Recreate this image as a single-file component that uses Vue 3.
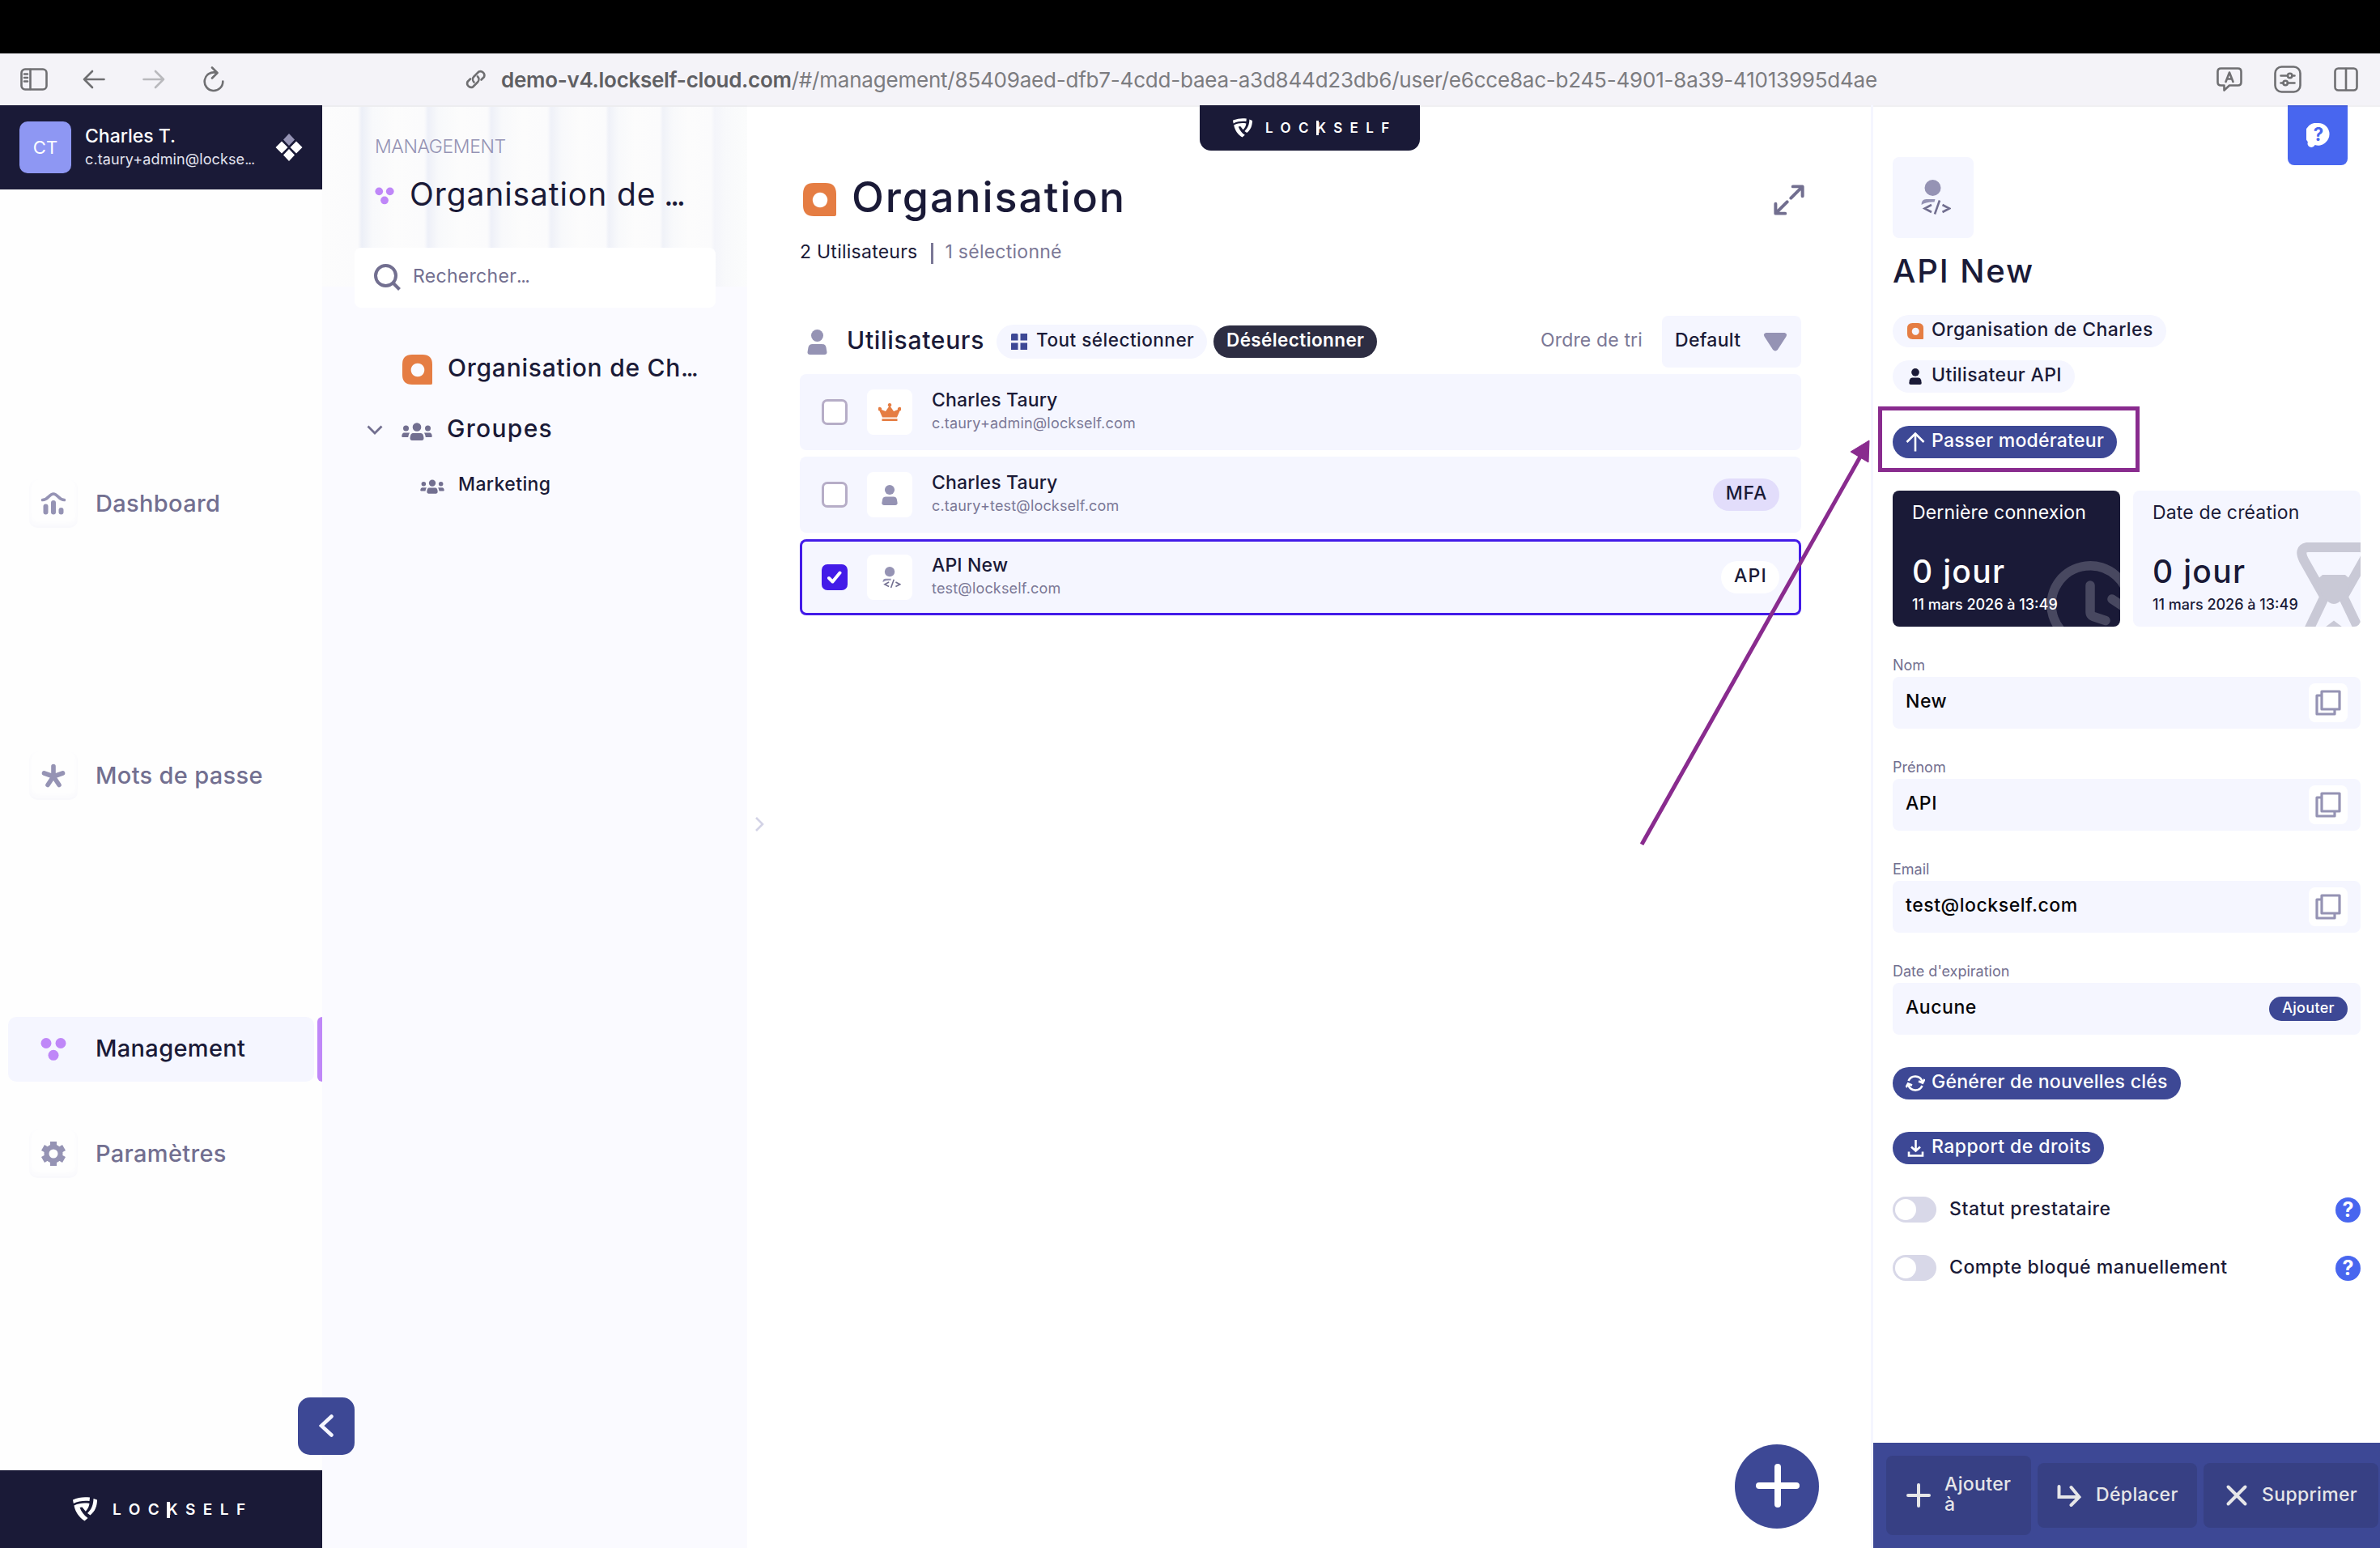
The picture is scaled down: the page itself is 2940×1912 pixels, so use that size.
<template>
  <div class="screen">
    <!-- icônes partagées -->
    <svg class="sprite" aria-hidden="true">
      <symbol id="i-shield" viewBox="0 0 30 30">
        <path d="M0 3.5C7 .3 14 -.4 21 .6L20.5 5C14 4.2 7 5 .8 8z" />
        <path d="M25.5 2L30 3.600C30 11 27.500 18 21.500 22.500L18 20C23.500 15 25.300 9 25.500 2z" />
        <path d="M1.500 10.500C8 7.500 14 7 20.500 8C20 12 18.500 15 15.800 17.700L11.500 12.500L8.500 13C10.500 18 13.500 22.500 18.500 26L14.500 29.500C7.500 25 3 18.500 1.500 10.500z" />
      </symbol>
      <symbol id="i-dots" viewBox="0 0 32 28">
        <circle cx="7" cy="6.500" r="6.500" /><circle cx="25" cy="6.500" r="6.500" /><circle cx="16" cy="21.300" r="6.500" />
      </symbol>
      <symbol id="i-dash" viewBox="0 0 30 28">
        <path d="M1.500 9.500C9 9.500 9.500 2 15 2s6 7.500 13.500 7.500" fill="none" stroke="currentColor" stroke-width="3.600" stroke-linecap="round" />
        <rect x="2.500" y="14.500" width="6" height="13" rx="3" /><rect x="12" y="10" width="6" height="17.500" rx="3" /><rect x="21.500" y="19" width="6" height="8.500" rx="3" />
      </symbol>
      <symbol id="i-star" viewBox="0 0 30 30">
        <path d="M15 3.500V16M15 16L3.500 12M15 16L26.500 12M15 16L8 26.500M15 16L22 26.500" fill="none" stroke="currentColor" stroke-width="5.600" stroke-linecap="round" />
      </symbol>
      <symbol id="i-gear" viewBox="0 0 30 30">
        <circle cx="15" cy="15" r="8.500" fill="none" stroke="currentColor" stroke-width="6" />
        <path d="M11 0h8v6h-8zM11 24h8v6h-8zM0 11L4 4.100L9.500 7.200L5.500 14.100zM20.500 22.800L24.500 15.900L30 19L26 25.900zM0 19L4 25.900L9.500 22.800L5.500 15.900zM20.500 7.200L24.500 14.100L30 11L26 4.100z" />
      </symbol>
      <symbol id="i-org" viewBox="0 0 40 40">
        <path fill-rule="evenodd" d="M13 0H27Q40 0 40 13V38Q40 40 38 40H13Q0 40 0 27V13Q0 0 13 0zM20.500 11.500a9 9 0 1 0 .010 0z" />
      </symbol>
      <symbol id="i-user" viewBox="0 0 24 31">
        <circle cx="12" cy="7.500" r="7.500" /><path d="M6 18H18Q22 18 23 22L24 28Q24 31 21 31H3Q0 31 0 28L1 22Q2 18 6 18z" />
      </symbol>
      <symbol id="i-group" viewBox="0 0 38 22">
        <circle cx="19" cy="5.500" r="5.300" /><circle cx="5.500" cy="7" r="3.500" /><circle cx="32.500" cy="7" r="3.500" />
        <path d="M14 13H24Q27 13 27.500 19Q27.500 22 25 22H13Q10.500 22 10.500 19Q11 13 14 13zM3 12.500H10Q8.500 15 8.200 18H1.500Q0 18 .3 16.200Q1 12.500 3 12.500zM28 12.500H35Q37 12.500 37.700 16.200Q38 18 36.500 18H29.800Q29.500 15 28 12.500z" />
      </symbol>
      <symbol id="i-api" viewBox="0 0 36 44">
        <circle cx="14" cy="10" r="10" />
        <path d="M0 31Q0 24 6 24H17L16 27.500Q6 27 0 31z" />
        <path d="M12.500 31L4 35.500L12.500 40M26 31L34.500 35.500L26 40M22.500 25.500L16.500 42.500" fill="none" stroke="#726f90" stroke-width="2.600" />
      </symbol>
      <symbol id="i-crown" viewBox="0 0 28 22">
        <path d="M14 0a2.200 2.200 0 0 1 1 4.200L19 10L24 8A2.300 2.300 0 1 1 26.500 9.500L23 17.500H5L1.500 9.500A2.300 2.300 0 1 1 4 8L9 10L13 4.200A2.200 2.200 0 0 1 14 0zM4.500 19.200H23.500V22H4.500z" />
      </symbol>
      <symbol id="i-copy" viewBox="0 0 32 32">
        <path d="M8 2H30V24H8zM7 7H2V30H24V25" fill="none" stroke="currentColor" stroke-width="3.200" stroke-linejoin="round" />
      </symbol>
      <symbol id="i-up" viewBox="0 0 24 24"><path d="M12 23.500V2M1.500 12L12 1.500L22.500 12" /></symbol>
      <symbol id="i-refresh" viewBox="0 0 24 24">
        <path d="M3.500 9A9.200 9.200 0 0 1 20.500 9.500M20.500 15A9.200 9.200 0 0 1 3.500 14.500M16 9.500L21 11.500L23.500 7M.500 17L3 12.500L8 14.500" />
      </symbol>
      <symbol id="i-download" viewBox="0 0 24 24"><path d="M12.500 2V15M7 10.500L12.500 15.500L18 10.500M4 16.500V21.500H21V16.500" /></symbol>
      <symbol id="i-plus" viewBox="0 0 30 30"><path d="M15 2V28M2 15H28" /></symbol>
      <symbol id="i-move" viewBox="0 0 30 30"><path d="M2.500 4V17H27M17.500 5L27.500 17L17.500 27" /></symbol>
      <symbol id="i-cross" viewBox="0 0 30 30"><path d="M4.500 4.500L25.500 25.500M25.500 4.500L4.500 25.500" /></symbol>
    </svg>

    <div class="notch"></div>

    <header class="toolbar">
      <svg class="tb-sidebar" viewBox="0 0 34 28"><rect x="1.500" y="1.500" width="31" height="25" rx="4.500" /><path d="M12.500 2V26M5 7.500H9M5 12H9M5 16.500H9" /></svg>
      <svg class="tb-back" viewBox="0 0 28 24"><path d="M12 2L2 12L12 22M2 12H26.500" /></svg>
      <svg class="tb-forward" viewBox="0 0 28 24"><path d="M16 2L26 12L16 22M26 12H1.500" /></svg>
      <svg class="tb-reload" viewBox="0 0 28 32"><path d="M17 7.800A11.300 11.300 0 1 0 25.300 18.500M12 1.500L18.500 8L12 14.500" /></svg>
      <svg class="tb-link" viewBox="0 0 28 28"><path d="M11.500 17.500A5 5 0 0 1 11.500 10.500L17.500 4.500A5 5 0 0 1 24 11L20.500 14.500M16 10.500A5 5 0 0 1 16 17.500L10 23.500A5 5 0 0 1 3.500 17L7 13.500" /></svg>
      <div class="url"><b>demo-v4.lockself-cloud.com</b>/#/management/85409aed-dfb7-4cdd-baea-a3d844d23db6/user/e6cce8ac-b245-4901-8a39-41013995d4ae</div>
      <svg class="tb-translate" viewBox="0 0 32 30"><path d="M5.500 1.500H26.500Q30.500 1.500 30.500 5.500V18.500Q30.500 22.500 26.500 22.500H16L9.500 28.500V22.500H5.500Q1.500 22.500 1.500 18.500V5.500Q1.500 1.500 5.500 1.500z" /><path d="M11.500 18L16 6.500L20.500 18M13 14.500H19" /></svg>
      <svg class="tb-settings" viewBox="0 0 34 34"><rect x="1.500" y="1.500" width="31" height="31" rx="8" /><path d="M8.500 12.500H17M22.500 12.500H25.500M8.500 21.500H11.500M17 21.500H25.500" /><circle cx="19.700" cy="12.500" r="2.700" /><circle cx="14.200" cy="21.500" r="2.700" /></svg>
      <svg class="tb-split" viewBox="0 0 30 30"><rect x="1.500" y="1.500" width="27" height="27" rx="4" /><path d="M15 2V28" /></svg>
    </header>

    <div class="app">
      <!-- navigation -->
      <aside class="nav">
        <div class="account">
          <div class="avatar">CT</div>
          <div class="account-text">
            <div class="account-name">Charles T.</div>
            <div class="account-mail">c.taury+admin@lockse<span class="dots">...</span></div>
          </div>
          <svg class="diamonds" viewBox="0 0 36 36">
            <path d="M18 1L25 8.500L18 16L11 8.500z" fill="#9593b4" />
            <path d="M9 10.500L16.500 18L9 25.500L1.500 18zM27 10.500L34.500 18L27 25.500L19.500 18zM18 20L25 27.500L18 35L11 27.500z" />
          </svg>
        </div>
        <nav class="nav-list">
          <div v-for="item in navItems" :key="item.label" class="nav-slot" :class="[item.slot, { active: item.active }]">
            <div class="nav-item">
              <span class="nav-tile"><svg><use :href="item.icon" /></svg></span>
              <span class="nav-label">{{ item.label }}</span>
            </div>
            <span v-if="item.active" class="nav-marker"></span>
          </div>
        </nav>
        <div class="nav-footer">
          <svg class="shield"><use href="#i-shield" /></svg>
          <div class="wordmark">LOC<span class="k">K</span>SELF</div>
        </div>
        <button class="collapse"><svg viewBox="0 0 18 28"><path d="M15.500 2.500L3 14L15.500 25.500" /></svg></button>
      </aside>

      <!-- arborescence -->
      <section class="tree">
        <div class="tree-hero">
          <div class="tree-kicker">MANAGEMENT</div>
          <div class="tree-title"><svg><use href="#i-dots" /></svg><span>Organisation de <span class="dots">...</span></span></div>
        </div>
        <div class="search">
          <svg viewBox="0 0 34 34"><circle cx="14.500" cy="14.500" r="12.500" /><path d="M23.500 23.500L31.500 31.500" /></svg>
          <div class="search-text">Rechercher<span class="dots">...</span></div>
        </div>
        <div class="tree-row root"><svg class="tree-org"><use href="#i-org" /></svg><span>Organisation de Ch<span class="dots">...</span></span></div>
        <div class="tree-row groups">
          <svg class="chevron" viewBox="0 0 20 12"><path d="M1.500 1.500L10 10L18.500 1.500" /></svg>
          <svg class="tree-group"><use href="#i-group" /></svg>Groupes
        </div>
        <div class="tree-row leaf"><svg class="tree-group"><use href="#i-group" /></svg>Marketing</div>
      </section>

      <!-- liste -->
      <main class="main">
        <svg class="panel-toggle" viewBox="0 0 12 20"><path d="M2 2L10 10L2 18" /></svg>
        <div class="brand-tab">
          <svg class="shield"><use href="#i-shield" /></svg>
          <div class="wordmark small">LOC<span class="k">K</span>SELF</div>
        </div>
        <div class="heading">
          <svg class="heading-org"><use href="#i-org" /></svg>
          <h1>Organisation</h1>
          <svg class="expand" viewBox="0 0 40 40"><path d="M25 2.500H37.500V15M37 3L22.500 17.500M2.500 25V37.500H15M3 37L17.500 22.500" /></svg>
        </div>
        <div class="counts"><span>2 Utilisateurs</span><i></i><span class="muted">1 sélectionné</span></div>
        <div class="list-head">
          <svg class="list-user"><use href="#i-user" /></svg>
          <h2>Utilisateurs</h2>
          <button class="pill select-all">
            <svg viewBox="0 0 20 20"><path d="M1.500 0H7a1.500 1.500 0 0 1 1.500 1.500V8.500H0V1.500A1.500 1.500 0 0 1 1.500 0zM11.500 0H20V8.500H11.500zM0 11.500H8.500V20H0zM11.500 11.500H20V20H11.500z" /></svg>
            Tout sélectionner
          </button>
          <button class="pill deselect">Désélectionner</button>
          <span class="sort-label">Ordre de tri</span>
          <div class="sort">Default<svg viewBox="0 0 30 24"><path d="M3 0H27Q31 1 29 5L18 22Q15 25 12 22L1 5Q-1 1 3 0z" /></svg></div>
        </div>
        <div class="rows">
          <div v-for="user in users" :key="user.mail" class="row" :class="{ selected: user.selected }">
            <span class="check"><svg v-if="user.selected" viewBox="0 0 18 16"><path d="M2 9L6.500 13.500L15.500 2.500" /></svg></span>
            <span class="row-tile"><svg :class="user.kind"><use :href="'#i-' + user.kind" /></svg></span>
            <div class="row-text">
              <div class="row-name">{{ user.name }}</div>
              <div class="row-mail">{{ user.mail }}</div>
            </div>
            <span v-if="user.tag" class="tag" :class="user.tag.toLowerCase()">{{ user.tag }}</span>
          </div>
        </div>
        <button class="fab"><svg viewBox="0 0 54 54"><path d="M27 4V50M4 27H50" /></svg></button>
      </main>

      <!-- détail -->
      <aside class="detail">
        <div class="help-tab">
          <svg viewBox="0 0 30 32"><path d="M15.500 0A14 14 0 0 1 29.500 14A14.500 14.500 0 0 1 11 28A4.500 4.500 0 1 1 2 24A14.500 14.500 0 0 1 15.500 0z" /><text x="15.500" y="22.500">?</text></svg>
        </div>
        <div class="detail-body">
          <div class="detail-tile"><svg><use href="#i-api" /></svg></div>
          <div class="detail-name">API New</div>
          <div class="chip org"><svg><use href="#i-org" /></svg>Organisation de Charles</div>
          <div class="chip api-user"><svg><use href="#i-user" /></svg>Utilisateur API</div>
          <button class="action promote"><svg><use href="#i-up" /></svg>Passer modérateur</button>
          <div class="cards">
            <div class="card dark">
              <svg class="clock" viewBox="0 0 110 110"><path d="M76 98A48 48 0 1 1 103 57M55 31V64Q55 68 59 69.500L74 74.500M82 48L106 64M96 92L104 84" /></svg>
              <div class="card-label">Dernière connexion</div>
              <div class="card-value">0 jour</div>
              <div class="card-date">11 mars 2026 à 13:49</div>
            </div>
            <div class="card">
              <svg class="hourglass" viewBox="0 0 94 120"><path d="M36 68L10 22Q3 8 14 6H80Q91 8 84 22L58 68M36 66L14 112M58 66L80 112M34 114L47 104L60 114" /><path class="sand" d="M33 40H61L69 47L60 68L53 74Q47 78 41 74L34 68L25 47z" /></svg>
              <div class="card-label">Date de création</div>
              <div class="card-value">0 jour</div>
              <div class="card-date">11 mars 2026 à 13:49</div>
            </div>
          </div>
          <div v-for="field in fields" :key="field.label" class="field">
            <div class="field-label">{{ field.label }}</div>
            <div class="field-box">
              <span>{{ field.value }}</span>
              <button v-if="field.action" class="add">{{ field.action }}</button>
              <span v-else class="copy"><svg><use href="#i-copy" /></svg></span>
            </div>
          </div>
          <button class="action keys"><svg><use href="#i-refresh" /></svg>Générer de nouvelles clés</button>
          <button class="action report"><svg><use href="#i-download" /></svg>Rapport de droits</button>
          <div v-for="label in switches" :key="label" class="switch-row">
            <span class="switch"></span><span class="switch-label">{{ label }}</span><span class="help">?</span>
          </div>
        </div>
        <div class="detail-footer">
          <button class="foot add-to"><svg><use href="#i-plus" /></svg><span>Ajouter<br>à</span></button>
          <button class="foot move"><svg><use href="#i-move" /></svg><span>Déplacer</span></button>
          <button class="foot remove"><svg><use href="#i-cross" /></svg><span>Supprimer</span></button>
        </div>
      </aside>
    </div>

    <!-- annotation -->
    <div class="mark-box"></div>
    <svg class="mark-arrow" viewBox="0 0 290 510"><path d="M4 502L274 23" /><polygon points="285,3 262,17 284,30" /></svg>
  </div>
</template>

<script setup>
const navItems = [
  { label: 'Dashboard', icon: '#i-dash', slot: 'dash' },
  { label: 'Mots de passe', icon: '#i-star', slot: 'pass' },
  { label: 'Management', icon: '#i-dots', slot: 'manage', active: true },
  { label: 'Paramètres', icon: '#i-gear', slot: 'params' }
]

const users = [
  { name: 'Charles Taury', mail: 'c.taury+admin@lockself.com', kind: 'crown' },
  { name: 'Charles Taury', mail: 'c.taury+test@lockself.com', kind: 'user', tag: 'MFA' },
  { name: 'API New', mail: 'test@lockself.com', kind: 'api', tag: 'API', selected: true }
]

const fields = [
  { label: 'Nom', value: 'New' },
  { label: 'Prénom', value: 'API' },
  { label: 'Email', value: 'test@lockself.com' },
  { label: "Date d'expiration", value: 'Aucune', action: 'Ajouter' }
]

const switches = ['Statut prestataire', 'Compte bloqué manuellement']
</script>

<style>
body {
  margin: 0;
  background: #fff;
}
</style>

<style scoped>
* {
  box-sizing: border-box;
}
.screen {
  position: relative;
  width: 2940px;
  height: 1912px;
  overflow: hidden;
  display: flex;
  flex-direction: column;
  background: #fff;
  color: #1a1a37;
  font-family: Inter, "Liberation Sans", sans-serif;
  font-size: 23px;
  line-height: 28px;
  white-space: nowrap;
}
.sprite {
  position: absolute;
  width: 0;
  height: 0;
}
svg {
  flex: none;
  fill: currentColor;
}
button {
  border: none;
  font: inherit;
  padding: 0;
  letter-spacing: inherit;
}
h1, h2 {
  margin: 0;
}

/* barre du navigateur */
.notch {
  height: 66px;
  background: #000;
}
.toolbar {
  height: 64px;
  background: #f4f3f8;
  display: flex;
  align-items: center;
  padding-left: 25px;
  color: #6f6f72;
}
.toolbar svg {
  fill: none;
  stroke: currentColor;
  stroke-width: 2.6;
  stroke-linecap: round;
  stroke-linejoin: round;
}
.tb-sidebar { width: 34px; height: 28px; }
.tb-back { width: 28px; height: 24px; margin-left: 43px; }
.toolbar .tb-forward { width: 28px; height: 24px; margin-left: 46px; color: #b9b9bd; }
.tb-reload { width: 28px; height: 32px; margin-left: 46px; }
.tb-link { width: 28px; height: 28px; margin-left: 296px; }
.url {
  width: 1720px;
  margin-left: 17px;
  padding-top: 2px;
  font-size: 26px;
  letter-spacing: -0.21px;
  color: #7c7c80;
}
.url b {
  font-weight: 600;
  letter-spacing: -0.29px;
  color: #5f5f63;
}
.tb-translate { width: 32px; height: 30px; margin-left: 399px; }
.tb-settings { width: 34px; height: 34px; margin-left: 39px; }
.tb-split { width: 30px; height: 30px; margin-left: 40px; }

.app {
  flex: 1;
  display: flex;
  min-height: 0;
  box-shadow: inset 0 2px #f0f0f2;
}

/* navigation */
.nav {
  position: relative;
  width: 398px;
  display: flex;
  flex-direction: column;
  background: #fefefe;
}
.account {
  height: 104px;
  padding-left: 24px;
  display: flex;
  align-items: center;
  background: #1a1a37;
  color: #fff;
}
.avatar {
  width: 64px;
  height: 64px;
  border-radius: 10px;
  background: #8e97f3;
  display: flex;
  align-items: center;
  justify-content: center;
  font-size: 22px;
}
.account-text {
  width: 235px;
  margin-left: 17px;
}
.account-name {
  font-size: 23px;
  font-weight: 500;
  line-height: 30px;
}
.account-mail {
  font-size: 18px;
  line-height: 28px;
  letter-spacing: 0.1px;
  color: #e3e3ee;
}
.account-mail .dots {
  letter-spacing: -1.3px;
}
.diamonds {
  width: 36px;
  height: 36px;
  margin-left: -1px;
}
.nav-list {
  flex: 1;
}
.nav-slot {
  display: flex;
  justify-content: space-between;
  height: 80px;
}
.nav-slot.dash { margin-top: 348px; }
.nav-slot.pass { margin-top: 256px; }
.nav-slot.manage { margin-top: 258px; }
.nav-slot.params { margin-top: 49px; }
.nav-item {
  width: 378px;
  margin-left: 10px;
  padding-left: 26px;
  border-radius: 10px;
  display: flex;
  align-items: center;
  color: #726f90;
}
.nav-tile {
  width: 60px;
  height: 60px;
  border-radius: 10px;
  display: flex;
  align-items: center;
  justify-content: center;
  color: #9593b4;
  box-shadow: inset 0 -4px 7px #f8f8fc;
}
.nav-tile svg {
  width: 30px;
  height: 30px;
}
.nav-label {
  margin-left: 22px;
  font-size: 29px;
  font-weight: 500;
  letter-spacing: 0.33px;
}
.active .nav-label {
  padding-bottom: 3px;
}
.active .nav-item {
  background: #f5f6ff;
  color: #1a1a37;
}
.active .nav-tile {
  color: #bf87f8;
  box-shadow: none;
}
.active .nav-tile svg {
  width: 32px;
}
.nav-marker {
  width: 6px;
  border-radius: 6px 0 0 6px;
  background: #bf87f8;
}
.nav-footer {
  height: 96px;
  padding-left: 90px;
  display: flex;
  align-items: center;
  background: #1a1a37;
  color: #fff;
}
.shield {
  width: 30px;
  height: 30px;
}
.wordmark {
  margin-left: 19px;
  padding-top: 2px;
  font-size: 19px;
  font-weight: 600;
  letter-spacing: 9.5px;
}
.k {
  position: relative;
}
.k::before {
  content: "";
  position: absolute;
  left: 0;
  top: 2px;
  width: 4px;
  height: 20px;
  background: #fff;
}
.collapse {
  position: absolute;
  left: 368px;
  top: 1596px;
  width: 70px;
  height: 71px;
  border-radius: 15px;
  background: #3d4895;
  z-index: 2;
}
.collapse svg {
  width: 18px;
  height: 28px;
  margin-top: 4px;
  fill: none;
  stroke: #f5f6ff;
  stroke-width: 4.5;
  stroke-linecap: round;
}

/* arborescence */
.tree {
  width: 525px;
  background-color: #fafaff;
  background-image:
    linear-gradient(90deg,
      #fcfcfc 0, #fbfbfc 44px, #eceff7 49px, #f8f9fb 62px,
      #fcfcfc 90px, #fbfbfc 126px, #eef0f8 131px, #f8f9fb 144px,
      #fcfcfc 170px, #fbfbfc 204px, #eef0f8 209px, #f8f9fb 222px,
      #fcfcfc 246px, #fbfbfc 278px, #eff1f8 283px, #f8f9fb 296px,
      #fcfcfc 318px, #fbfbfc 350px, #eff1f8 354px, #f8f9fb 366px,
      #fcfcfc 386px, #fbfbfc 417px, #f0f2f8 421px, #f8f9fb 433px,
      #fcfcfc 452px, #fbfbfc 480px, #f4f5fa 485px, #f8f9fb 498px, #fbfcfc 525px);
  background-size: 525px 224px;
  background-repeat: no-repeat;
  box-shadow: inset 0 2px #ededf0;
}
.tree-hero {
  height: 176px;
  padding: 37px 0 0 65px;
}
.tree-kicker {
  font-size: 23px;
  font-weight: 300;
  letter-spacing: -0.4px;
  color: #9593b4;
}
.tree-title {
  display: flex;
  align-items: center;
  margin-top: 21px;
  height: 48px;
  font-size: 39px;
  letter-spacing: 0.9px;
}
.tree-title .dots {
  margin-left: -2px;
  letter-spacing: -3.5px;
}
.tree-title svg {
  width: 24px;
  height: 22px;
  margin: 4px 19px 0 0;
  color: #bf87f8;
}
.search {
  width: 446px;
  height: 74px;
  margin-left: 40px;
  padding-left: 24px;
  border-radius: 8px;
  background: #fff;
  display: flex;
  align-items: center;
  color: #726f90;
}
.search svg {
  width: 34px;
  height: 34px;
  fill: none;
  stroke: currentColor;
  stroke-width: 4;
}
.search-text {
  margin-left: 14px;
  padding-bottom: 4px;
  letter-spacing: 0.3px;
}
.search .dots {
  letter-spacing: -1.5px;
}
.tree-row {
  display: flex;
  align-items: center;
  height: 40px;
  font-size: 30px;
  font-weight: 500;
}
.tree-row svg {
  color: #726f90;
}
.root {
  margin-top: 54px;
  padding-left: 99px;
  letter-spacing: 0.75px;
}
.root .dots {
  letter-spacing: -2.8px;
}
.root .tree-org {
  width: 37px;
  height: 37px;
  margin: 5px 19px 0 0;
  color: #e57d43;
}
.groups {
  margin-top: 35px;
  padding-left: 55px;
  letter-spacing: 1.3px;
}
.chevron {
  width: 20px;
  height: 12px;
  margin: 4px 23px 0 0;
  fill: none !important;
  stroke: currentColor;
  stroke-width: 2.8;
}
.tree-group {
  width: 38px;
  height: 22px;
  margin: 8px 18px 0 0;
}
.leaf {
  margin-top: 29px;
  padding-left: 121px;
  font-size: 23px;
  letter-spacing: 0.4px;
}
.leaf .tree-group {
  width: 30px;
  height: 18px;
  margin: 6px 17px 0 0;
}

/* liste des utilisateurs */
.main {
  position: relative;
  width: 1388px;
  padding-left: 65px;
}
.panel-toggle {
  position: absolute;
  left: 9px;
  top: 878px;
  width: 12px;
  height: 20px;
  fill: none;
  stroke: #d3d3e6;
  stroke-width: 2.6;
}
.brand-tab {
  width: 272px;
  height: 56px;
  margin-left: 494px;
  padding-left: 40px;
  border-radius: 0 0 14px 14px;
  background: #1a1a37;
  color: #fff;
  display: flex;
  align-items: center;
}
.brand-tab .shield {
  width: 26px;
  height: 24px;
}
.wordmark.small {
  margin-left: 15px;
  padding-top: 0;
  font-size: 17px;
  letter-spacing: 9.4px;
}
.small .k::before {
  top: 1px;
  width: 3px;
  height: 18px;
}
.heading {
  height: 60px;
  margin-top: 28px;
  padding-left: 4px;
  display: flex;
  align-items: center;
}
.heading-org {
  width: 41px;
  height: 41px;
  margin-top: 5px;
  color: #e57d43;
}
h1 {
  width: 1139px;
  margin-left: 19px;
  font-size: 52px;
  font-weight: 500;
  line-height: 60px;
  letter-spacing: 1.9px;
}
.expand {
  width: 38px;
  height: 38px;
  margin-top: 5px;
  fill: none;
  stroke: #726f90;
  stroke-width: 4.2;
  stroke-linecap: round;
  stroke-linejoin: round;
}
.counts {
  display: flex;
  align-items: center;
  height: 30px;
  margin-top: 22px;
  letter-spacing: 0.25px;
}
.counts i {
  width: 3px;
  height: 26px;
  margin: 3px 15px 0 16px;
  background: #7b7896;
}
.muted {
  color: #7b7896;
}
.list-head {
  display: flex;
  align-items: center;
  height: 64px;
  margin-top: 64px;
}
.list-user {
  width: 25px;
  height: 31px;
  margin-left: 9px;
  color: #9593b4;
}
h2 {
  width: 185px;
  margin-left: 24px;
  padding-bottom: 4px;
  font-size: 30px;
  font-weight: 500;
  letter-spacing: 0.7px;
}
.pill {
  display: flex;
  align-items: center;
  font-weight: 500;
  font-size: 22.500px;
}
.select-all {
  width: 260px;
  height: 42px;
  padding: 0 0 4px 18px;
  border-radius: 21px;
  background: #f5f6ff;
  color: #1a1a37;
  letter-spacing: 0.5px;
}
.select-all svg {
  width: 20px;
  height: 20px;
  margin: 4px 11px 0 0;
  color: #3d4895;
}
.deselect {
  width: 202px;
  height: 40px;
  margin-left: 8px;
  padding: 0 0 4px 16px;
  border-radius: 20px;
  background: #2d2d42;
  color: #fff;
  font-weight: 600;
  letter-spacing: 0.4px;
}
.sort-label {
  width: 150px;
  margin-left: 202px;
  padding-bottom: 5px;
  letter-spacing: 0.15px;
  color: #7b7896;
}
.sort {
  width: 172px;
  height: 64px;
  padding: 0 17px 4px 16px;
  border-radius: 8px;
  background: #f5f6ff;
  display: flex;
  align-items: center;
  justify-content: space-between;
  font-weight: 500;
  letter-spacing: 0.3px;
}
.sort svg {
  width: 30px;
  height: 23px;
  margin-top: 4px;
  color: #9593b4;
}
.rows {
  display: flex;
  flex-direction: column;
  gap: 8px;
  margin-top: 8px;
  width: 1237px;
}
.row {
  display: flex;
  align-items: center;
  height: 94px;
  padding: 0 27px;
  border-radius: 8px;
  background: #f5f6ff;
}
.row.selected {
  box-shadow: inset 0 0 0 3px #431be8;
}
.check {
  width: 32px;
  height: 32px;
  border: 3px solid #b6adc7;
  border-radius: 7px;
  background: #fff;
  display: flex;
  align-items: center;
  justify-content: center;
}
.selected .check {
  border-color: #431be8;
  background: #431be8;
}
.check svg {
  width: 18px;
  height: 16px;
  fill: none;
  stroke: #fff;
  stroke-width: 4;
  stroke-linecap: round;
  stroke-linejoin: round;
}
.row-tile {
  width: 56px;
  height: 56px;
  margin-left: 24px;
  border-radius: 8px;
  background: #fff;
  display: flex;
  align-items: center;
  justify-content: center;
  color: #9593b4;
}
.row-tile .crown { width: 28px; height: 22px; color: #e57d43; }
.row-tile .user { width: 20px; height: 25px; }
.row-tile .api { width: 23px; height: 27px; margin-left: 4px; }
.row-text {
  flex: 1;
  margin-left: 24px;
  padding-bottom: 2px;
}
.row-name {
  font-weight: 500;
  line-height: 30px;
  letter-spacing: 0.15px;
}
.row-mail {
  font-size: 18px;
  line-height: 28px;
  letter-spacing: 0.18px;
  color: #7b7896;
}
.tag {
  height: 40px;
  padding: 4px 15px 0 16px;
  border-radius: 20px;
  background: #fff;
  font-weight: 500;
  letter-spacing: 1.2px;
}
.tag.mfa {
  background: #e2ddfb;
  letter-spacing: 0.8px;
}
.fab {
  position: absolute;
  left: 1220px;
  top: 1654px;
  width: 104px;
  height: 104px;
  border-radius: 50%;
  background: #3d4895;
}
.fab svg {
  width: 54px;
  height: 54px;
  margin: 4px 0 0 2px;
  fill: none;
  stroke: #fff;
  stroke-width: 8;
  stroke-linecap: round;
}

/* détail utilisateur */
.detail {
  position: relative;
  width: 629px;
  display: flex;
  flex-direction: column;
  border-left: 3px solid #f5f6ff;
}
.help-tab {
  position: absolute;
  left: 512px;
  top: 0;
  width: 74px;
  height: 74px;
  border-radius: 0 0 8px 8px;
  background: #4866ef;
  border-top: 2px solid #4660dc;
  display: flex;
  align-items: center;
  justify-content: center;
}
.help-tab svg {
  width: 29px;
  height: 31px;
  margin-bottom: 2px;
  fill: #fff;
}
.help-tab text {
  fill: #4866ef;
  font-size: 23px;
  font-weight: 700;
  text-anchor: middle;
}
.detail-body {
  flex: 1;
  width: 602px;
  padding: 64px 0 0 24px;
  display: flex;
  flex-direction: column;
  align-items: flex-start;
}
.detail-tile {
  width: 100px;
  height: 100px;
  border-radius: 8px;
  background: #f5f6ff;
  display: flex;
  align-items: center;
  justify-content: center;
  color: #9593b4;
}
.detail-tile svg {
  width: 37px;
  height: 44px;
  margin-left: 6px;
}
.detail-name {
  height: 48px;
  margin-top: 17px;
  font-size: 40px;
  font-weight: 500;
  line-height: 48px;
  letter-spacing: 1.9px;
}
.chip {
  height: 40px;
  padding: 0 16px 4px 18px;
  border-radius: 20px;
  background: #f5f6ff;
  display: flex;
  align-items: center;
  font-weight: 500;
  letter-spacing: 0.4px;
}
.chip.org {
  margin-top: 30px;
}
.chip svg {
  width: 20px;
  height: 20px;
  margin: 4px 10px 0 0;
}
.chip.org svg {
  color: #e57d43;
}
.chip.api-user {
  margin-top: 16px;
}
.action {
  display: flex;
  align-items: center;
  height: 40px;
  padding: 0 16px 4px;
  border-radius: 20px;
  background: #3d4895;
  color: #fff;
  font-weight: 500;
  letter-spacing: 0.25px;
}
.action svg {
  width: 24px;
  height: 24px;
  margin: 4px 8px 0 0;
  fill: none;
  stroke: currentColor;
  stroke-width: 2.600;
}
.promote { margin-top: 41px; }
.cards {
  display: flex;
  gap: 16px;
  margin-top: 40px;
}
.card {
  position: relative;
  width: 281px;
  height: 168px;
  padding: 13px 24px;
  border-radius: 8px;
  overflow: hidden;
  background: #f5f6ff;
}
.card.dark {
  background: #1a1a37;
  color: #fff;
}
.card svg {
  position: absolute;
  fill: none;
  stroke-linecap: round;
}
.clock {
  left: 189px;
  top: 86px;
  width: 110px;
  height: 110px;
  stroke: #484860;
  stroke-width: 11.5;
}
.hourglass {
  left: 201px;
  top: 64px;
  width: 94px;
  height: 120px;
  stroke: #c9c9d6;
  stroke-width: 12;
}
.hourglass .sand {
  fill: #c9c9d6;
  stroke: none;
}
.card-label {
  letter-spacing: 0.15px;
}
.card-value {
  position: relative;
  margin-top: 35px;
  font-size: 39px;
  font-weight: 500;
  line-height: 48px;
  letter-spacing: 1.3px;
}
.card-date {
  position: relative;
  margin-top: 4px;
  font-size: 18px;
  font-weight: 500;
  line-height: 26px;
}
.field {
  width: 578px;
  margin-top: 34px;
}
.field-label {
  height: 28px;
  font-size: 18px;
  line-height: 28px;
  color: #726f90;
}
.field-box {
  display: flex;
  align-items: center;
  justify-content: space-between;
  height: 64px;
  padding: 0 16px;
  border-radius: 8px;
  background: #f5f6ff;
  color: #050508;
  font-weight: 500;
  letter-spacing: 0.55px;
}
.field-box > span:first-child {
  padding-bottom: 4px;
}
.copy {
  width: 48px;
  height: 48px;
  border-radius: 8px;
  background: #fff;
  display: flex;
  align-items: center;
  justify-content: center;
  color: #9593b4;
}
.copy svg {
  width: 32px;
  height: 32px;
}
.add {
  width: 97px;
  height: 30px;
  padding-bottom: 2px;
  border-radius: 15px;
  background: #3d4895;
  color: #fff;
  font-size: 18px;
  letter-spacing: 0.3px;
}
.keys { margin-top: 40px; }
.report {
  margin: 40px 0 8px;
  letter-spacing: 0.45px;
}
.switch-row {
  display: flex;
  align-items: center;
  width: 578px;
  height: 32px;
  margin-top: 32px;
  font-weight: 500;
  letter-spacing: 0.54px;
}
.switch-row + .switch-row {
  margin-top: 40px;
}
.switch {
  width: 54px;
  height: 32px;
  padding: 3px;
  border-radius: 16px;
  background: #d8d8e8;
}
.switch::before {
  content: "";
  display: block;
  width: 26px;
  height: 26px;
  border-radius: 50%;
  background: #fff;
}
.switch-label {
  flex: 1;
  margin-left: 16px;
  padding-bottom: 3px;
}
.help {
  width: 31px;
  height: 31px;
  border-radius: 50%;
  background: #4866ef;
  color: #fff;
  font-size: 25px;
  font-weight: 700;
  line-height: 31px;
  letter-spacing: 0;
  text-align: center;
}
.detail-footer {
  display: flex;
  align-items: center;
  gap: 8px;
  height: 130px;
  padding-left: 16px;
  background: #3d4895;
}
.foot {
  display: flex;
  align-items: center;
  height: 80px;
  border-radius: 8px;
  background: #374084;
  color: #e6e6e8;
  font-weight: 500;
  line-height: 25px;
  text-align: left;
  letter-spacing: 0.35px;
}
.foot span {
  padding-bottom: 2px;
}
.foot svg {
  width: 30px;
  height: 30px;
  fill: none;
  stroke: currentColor;
  stroke-width: 4;
  stroke-linecap: round;
}
.add-to { width: 179px; height: 98px; padding-left: 25px; }
.add-to svg { margin-right: 17px; }
.move { width: 197px; padding-left: 24px; }
.move svg { margin-right: 18px; }
.remove { width: 216px; padding-left: 26px; }
.remove svg { margin-right: 16px; }

/* annotation */
.mark-box {
  position: absolute;
  left: 2320px;
  top: 502px;
  width: 323px;
  height: 81px;
  border: 5px solid #892b8e;
}
.mark-arrow {
  position: absolute;
  left: 2024px;
  top: 541px;
  width: 290px;
  height: 510px;
  fill: #892b8e;
  stroke: #892b8e;
  stroke-width: 5;
}
.mark-arrow polygon {
  stroke-width: 1;
}
</style>
